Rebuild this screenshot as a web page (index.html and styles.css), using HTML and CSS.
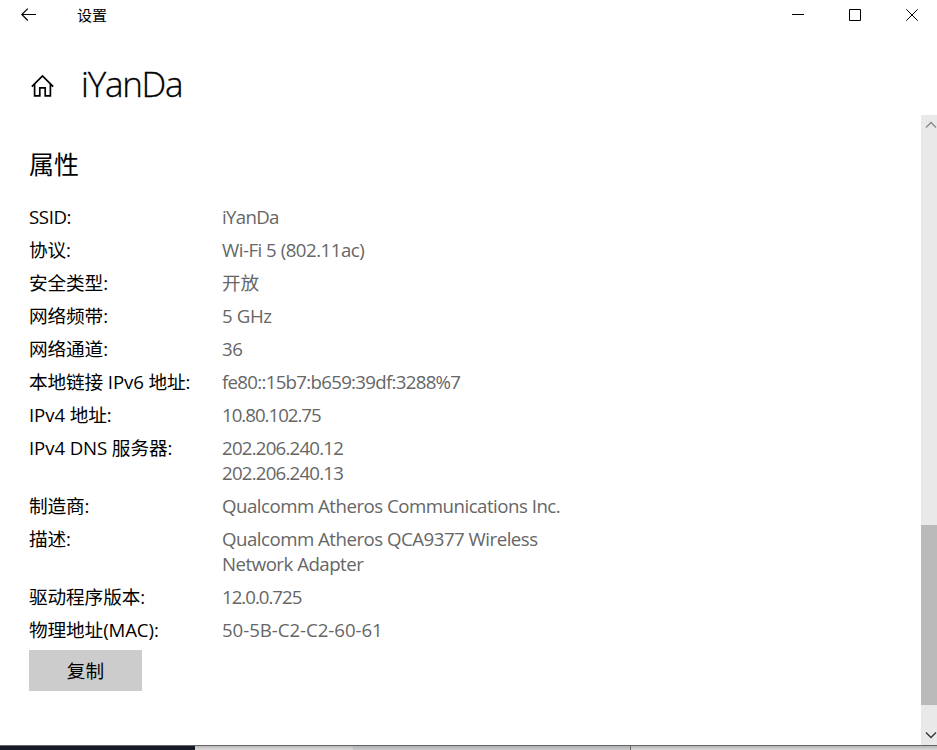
FILE: index.html
```html
<!DOCTYPE html>
<html lang="zh-CN">
<head>
<meta charset="utf-8">
<title>设置</title>
<link rel="stylesheet" href="styles.css">
</head>
<body>
<div class="window">
  <header class="titlebar">
    <svg class="back" width="16" height="14" viewBox="0 0 16 14"><path d="M15 6.5H.8M6.8 .6.8 6.5l6 6"/></svg>
    <span class="app-name">设置</span>
    <div class="controls">
      <svg width="12" height="12" viewBox="0 0 12 12"><path d="M0 5.5h12"/></svg>
      <svg width="12" height="12" viewBox="0 0 12 12"><path d="M.5 .5h11v11H.5z"/></svg>
      <svg width="12" height="12" viewBox="0 0 12 12"><path d="M.3 .3l11.4 11.4M11.7 .3.3 11.7"/></svg>
    </div>
  </header>
  <div class="page-head">
    <svg class="home" width="24" height="24" viewBox="0 0 24 24"><path d="M.8 12.6 11.5 1.9l10.7 10.7M3.6 10v11.8h5.2v-8h5.4v8h5.2V10"/></svg>
    <h1>iYanDa</h1>
  </div>
  <div class="body">
    <main>
      <h2>属性</h2>
      <dl>
        <dt class="snug">SSID:</dt><dd class="tight">iYanDa</dd>
        <dt>协议:</dt><dd>Wi-Fi 5 (802.11ac)</dd>
        <dt>安全类型:</dt><dd class="wide">开放</dd>
        <dt>网络频带:</dt><dd class="snug">5 GHz</dd>
        <dt>网络通道:</dt><dd>36</dd>
        <dt>本地链接 IPv6 地址:</dt><dd class="tight">fe80::15b7:b659:39df:3288%7</dd>
        <dt>IPv4 地址:</dt><dd class="tightest">10.80.102.75</dd>
        <dt>IPv4 DNS 服务器:</dt><dd class="tighter">202.206.240.12<br>202.206.240.13</dd>
        <dt>制造商:</dt><dd>Qualcomm Atheros Communications Inc.</dd>
        <dt>描述:</dt><dd>Qualcomm Atheros QCA9377 Wireless<br>Network Adapter</dd>
        <dt>驱动程序版本:</dt><dd class="tightest">12.0.0.725</dd>
        <dt>物理地址(MAC):</dt><dd class="wide">50-5B-C2-C2-60-61</dd>
      </dl>
      <button>复制</button>
    </main>
    <aside class="scrollbar">
      <svg class="up" width="16" height="20" viewBox="0 0 16 20"><path d="M5 12.5 10 7.5l5 5"/></svg>
      <div class="thumb"></div>
      <svg class="down" width="16" height="20" viewBox="0 0 16 20"><path d="M5 7.5l5 5 5-5"/></svg>
    </aside>
  </div>
  <footer class="behind"><i class="dark"></i><i class="light"></i><i class="mid"></i><i class="rest"></i></footer>
</div>
</body>
</html>
```
FILE: styles.css
```css
* { box-sizing: border-box; }
body {
  margin: 0;
  background: #fff;
  color: #000;
  font-family: "Open Sans", "Noto Sans CJK SC", sans-serif;
}
svg { display: block; fill: none; stroke: #000; stroke-width: 1; }
.window { display: flex; flex-direction: column; width: 937px; height: 750px; overflow: hidden; }
.titlebar { display: flex; align-items: center; height: 30px; padding: 0 19px 0 21px; }
.back { stroke-width: 1.2; }
.app-name { margin-left: 40px; font-size: 15px; line-height: 30px; }
.controls { display: flex; gap: 45px; margin-left: auto; }
.page-head { display: flex; align-items: center; height: 85px; padding: 26px 31px 0; }
.page-head h1 { margin: -4px 0 0 26px; font-size: 35px; line-height: 50px; font-weight: 300; letter-spacing: -1.25px; -webkit-text-stroke: .3px #000; }
.home { stroke-width: 1.7; }
.body { display: flex; flex: 1; min-height: 0; }
main { flex: 1; padding: 30px 0 0 29px; }
h2 { margin: 0; font-size: 25px; line-height: 38px; font-weight: 400; }
dl { display: grid; grid-template-columns: 193px 400px; row-gap: 8px; margin: 21px 0 8px; font-size: 18.67px; line-height: 25px; }
dt, dd { margin: 0; white-space: nowrap; }
dt { letter-spacing: -.12px; }
dd { color: #666; letter-spacing: -.5px; }
.wide { letter-spacing: -.05px; }
.snug { letter-spacing: -.4px; }
.tight { letter-spacing: -.7px; }
.tighter { letter-spacing: -.78px; }
.tightest { letter-spacing: -1px; }
button { display: block; width: 113px; height: 41px; padding: 0 0 2px; border: 0; background: #ccc; color: #000; font: inherit; font-size: 18.67px; }
.scrollbar { display: flex; flex-direction: column; width: 16px; background: #e9e9e9; }
.scrollbar .up { stroke: #888; stroke-width: 1.3; }
.scrollbar .down { margin-top: auto; stroke: #333; stroke-width: 1.3; }
.thumb { height: 180px; margin-top: 390px; background: #b9b9b9; }
.behind { display: flex; height: 5px; border-top: 1px solid #666; }
.dark { width: 195px; background: #171b25; }
.light { width: 158px; background: linear-gradient(#bbb, #dcdcdc); }
.mid { width: 278px; background: linear-gradient(#aeb1b4, #c8cbce); border-right: 1px solid #666; }
.rest { flex: 1; background: linear-gradient(#b5b5b5, #dadada); }
```
